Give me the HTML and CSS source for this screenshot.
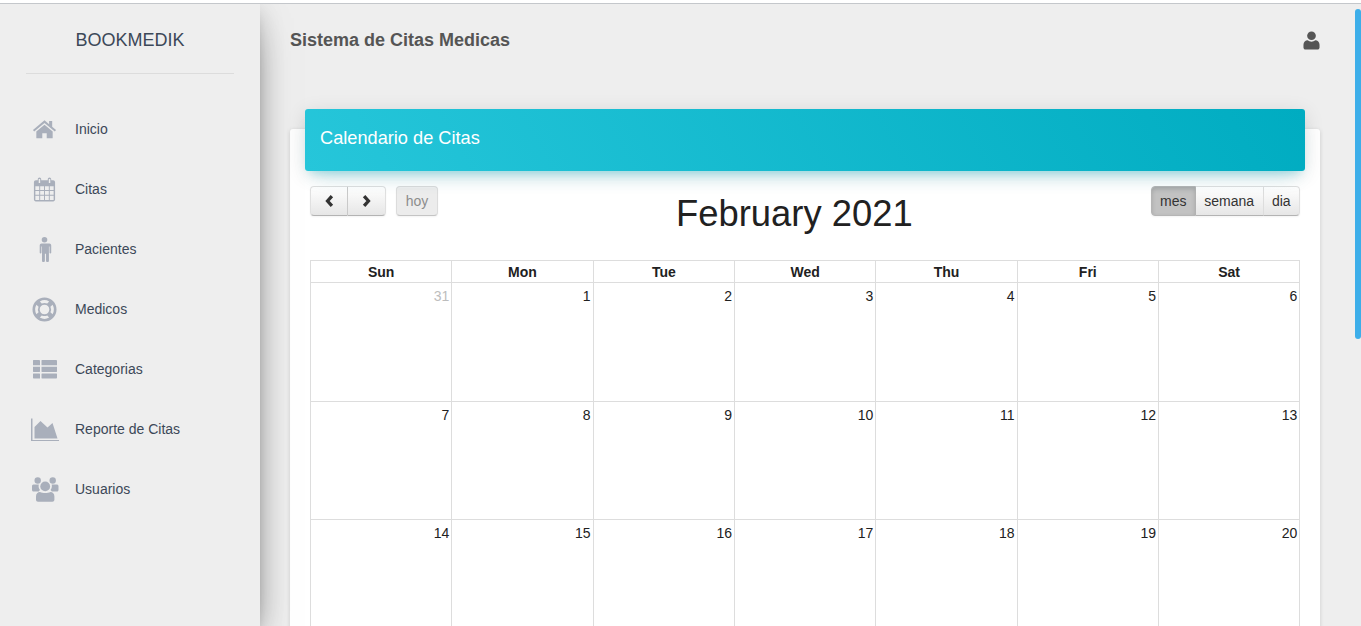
FILE: index.html
```html
<!DOCTYPE html>
<html lang="en">
<head>
  <meta charset="UTF-8">
  <title>BookMedik</title>
  <link rel="stylesheet" href="styles.css">
</head>
<body>

<div class="wrapper">
  <aside class="sidebar">
    <div class="logo">BOOKMEDIK</div>
    <ul class="nav">
      <li>
        <svg class="icon" viewBox="0 0 26 26"><path d="M13 3.500 1 13.600l1.300 1.400L13 6.200 23.700 15l1.300-1.400-4-3.400V4.200h-3.200v3.300z"/><path d="M13 8 4.500 15v7.200h6.200v-5.400h4.600v5.400h6.200V15z"/></svg>
        <span>Inicio</span>
      </li>
      <li>
        <svg class="icon" viewBox="-2 0 26 25">
          <path fill-rule="evenodd" d="M2 3h2V2c0-1 .8-2 1.800-2s1.800 1 1.800 2v1h6.800V2c0-1 .8-2 1.800-2S18 1 18 2v1h2c1.100 0 2 .9 2 2v18c0 1.100-.9 2-2 2H2c-1.100 0-2-.9-2-2V5c0-1.100.9-2 2-2zM5 1.500v4.300h1.500V1.500zM15.500 1.500v4.300H17V1.500zM1.500 9v4h4V9zM6.500 9v4h4V9zM11.500 9v4h4V9zM16.500 9v4h4V9zM1.500 14v4h4v-4zM6.500 14v4h4v-4zM11.500 14v4h4v-4zM16.500 14v4h4v-4zM1.500 19v4.500h4V19zM6.500 19v4.500h4V19zM11.500 19v4.500h4V19zM16.500 19v4.500h4V19z"/>
        </svg>
        <span>Citas</span>
      </li>
      <li>
        <svg class="icon" viewBox="0 0 26 26"><circle cx="13" cy="2.900" r="2.900"/><path d="M8 6.800h10c1.200 0 2 .8 2 2v7.600c0 .9-1.800.9-1.800 0V10h-.6v15c0 1.300-3 1.300-3 0v-7.600h-1.200V25c0 1.300-3 1.300-3 0V10h-.6v6.400c0 .9-1.800.9-1.800 0V8.800c0-1.200.8-2 2-2z"/></svg>
        <span>Pacientes</span>
      </li>
      <li>
        <svg class="icon" viewBox="0 0 26 26"><path fill-rule="evenodd" d="M13 .500a12.500 12.500 0 1 1 0 25 12.500 12.500 0 0 1 0-25zM8.150 4.600l1.980 2.240a6.800 6.800 0 0 1 5.740 0l1.980-2.240a9.700 9.700 0 0 0-9.700 0zM21.400 8.150l-2.240 1.980a6.800 6.800 0 0 1 0 5.740l2.240 1.980a9.700 9.700 0 0 0 0-9.700zM17.850 21.400l-1.980-2.240a6.800 6.800 0 0 1-5.740 0l-1.980 2.240a9.700 9.700 0 0 0 9.700 0zM4.600 17.850l2.240-1.980a6.800 6.800 0 0 1 0-5.740L4.600 8.150a9.700 9.700 0 0 0 0 9.700zM13 8a5 5 0 1 0 0 10 5 5 0 0 0 0-10z"/></svg>
        <span>Medicos</span>
      </li>
      <li>
        <svg class="icon" viewBox="0 0 25 25"><path d="M1.500 3H7c.5 0 1 .4 1 1v4.300H1V3.500c0-.3.200-.5.500-.5zM10 3h14c.5 0 1 .4 1 1v4.300H9.500V3.500c0-.3.200-.5.500-.5zM1 9.800h7v4.700c0 .3-.2.5-.5.5h-6c-.3 0-.5-.2-.5-.5zM9.500 9.800H25v4.700c0 .3-.2.5-.5.500H10c-.3 0-.5-.2-.5-.5zM1.500 16.500h6c.3 0 .5.200.5.500v4.500H2c-.6 0-1-.4-1-1V17c0-.3.200-.5.500-.5zM10 16.500h14.500c.3 0 .5.200.5.500v3.500c0 .6-.4 1-1 1H10c-.3 0-.5-.2-.5-.5V17c0-.3.200-.5.500-.5z"/></svg>
        <span>Categorias</span>
      </li>
      <li>
        <svg class="icon icon-wide" viewBox="0 0 28 25"><path d="M0 1.500h1.500v21.500H28V24H0z"/><path d="M3.500 21.500V10L9.500 4l7 6.500L21.500 6l5 15.500z"/></svg>
        <span>Reporte de Citas</span>
      </li>
      <li>
        <svg class="icon icon-wide" viewBox="0 0 28 25"><circle cx="6.700" cy="3.500" r="3.200"/><circle cx="21.700" cy="3.500" r="3.200"/><circle cx="14.200" cy="9.400" r="4.900"/><path d="M2.500 7.500h5.300c-.5 1.800-.1 4 1.200 5.400-.6.500-1 1-1.300 1.600H2.500c-.8 0-1.500-.7-1.500-1.500v-3.500c0-1.100.4-2 1.500-2zM20.700 7.500H26c1.100 0 1.500.9 1.500 2V13c0 .8-.7 1.500-1.500 1.500h-5.200c-.3-.6-.7-1.100-1.300-1.600 1.300-1.400 1.700-3.600 1.200-5.400z"/><path d="M9 15c1.400.8 3.300 1 5.200 1s3.800-.2 5.200-1c2.400 0 4 1.600 4 4.500v3.300c0 1.100-.9 2-2 2H7c-1.100 0-2-.9-2-2v-3.300C5 16.600 6.600 15 9 15z"/></svg>
        <span>Usuarios</span>
      </li>
    </ul>
  </aside>

  <main class="main">
    <header class="topbar">
      <div class="brand">Sistema de Citas Medicas</div>
      <svg class="user-icon" viewBox="0 0 18 20"><circle cx="9" cy="5" r="4.600"/><path d="M5 9.800c1 .9 2.500 1.400 4 1.400s3-.5 4-1.400c2.500 0 4.500 2 4.500 4.700v2.800c0 1.300-1 2.200-2.200 2.200H2.700c-1.200 0-2.200-.9-2.200-2.200v-2.800c0-2.700 2-4.700 4.500-4.700z"/></svg>
    </header>

    <section class="card">
      <div class="card-header">Calendario de Citas</div>
      <div class="card-body">
        <div class="toolbar">
          <div class="toolbar-left">
            <div class="btn-group">
              <button class="fc-btn arrow">
                <svg viewBox="0 0 8 11"><path d="M6.200 1 2.200 5.500l4 4.500"/></svg>
              </button>
              <button class="fc-btn arrow">
                <svg viewBox="0 0 8 11"><path d="M1.800 1l4 4.500-4 4.500"/></svg>
              </button>
            </div>
            <button class="fc-btn today" disabled>hoy</button>
          </div>
          <h2 class="month">February 2021</h2>
          <div class="btn-group">
            <button class="fc-btn active">mes</button>
            <button class="fc-btn">semana</button>
            <button class="fc-btn">dia</button>
          </div>
        </div>

        <table class="calendar">
          <thead>
            <tr><th>Sun</th><th>Mon</th><th>Tue</th><th>Wed</th><th>Thu</th><th>Fri</th><th>Sat</th></tr>
          </thead>
          <tbody>
            <tr class="first"><td class="other">31</td><td>1</td><td>2</td><td>3</td><td>4</td><td>5</td><td>6</td></tr>
            <tr><td>7</td><td>8</td><td>9</td><td>10</td><td>11</td><td>12</td><td>13</td></tr>
            <tr><td>14</td><td>15</td><td>16</td><td>17</td><td>18</td><td>19</td><td>20</td></tr>
          </tbody>
        </table>
      </div>
    </section>
  </main>

  <div class="scrollbar"><div class="thumb"></div></div>
</div>

</body>
</html>
```

FILE: styles.css
```css
* { box-sizing: border-box; }

html {
  height: 100%;
  background-color: #fff;
  padding-top: 3px;
}

body {
  margin: 0;
  overflow: hidden;
  font-family: "Liberation Sans", Arial, sans-serif;
  background-color: #eee;
  color: #3c4858;
  border-top: 1px solid #c4c7cb;
}

.wrapper {
  display: flex;
  height: 622px;
  overflow: hidden;
}

/* Sidebar */
.sidebar {
  width: 260px;
  flex: none;
  background-color: #eee;
  box-shadow: 0 16px 38px -12px rgba(0,0,0,0.56), 0 4px 25px 0 rgba(0,0,0,0.12), 0 8px 10px -5px rgba(0,0,0,0.2);
  position: relative;
  z-index: 2;
}

.logo {
  margin: 0 26px;
  height: 70px;
  line-height: 72px;
  text-align: center;
  font-size: 18px;
  border-bottom: 1px solid #dcdcdc;
}

.nav {
  list-style: none;
  margin: 25px 0 0;
  padding: 0;
}

.nav li {
  height: 60px;
  display: flex;
  align-items: center;
  padding-left: 32px;
  font-size: 14px;
  color: #3c4858;
}

.nav li span {
  margin-left: 18px;
}

.icon {
  width: 25px;
  height: 25px;
  fill: #a9afbb;
  flex: none;
}

.icon-wide {
  width: 28px;
  margin-left: -1px;
  margin-right: -2px;
}

/* Main */
.main {
  flex: 1;
  padding: 0 41px 0 30px;
  min-width: 0;
}

.topbar {
  height: 72px;
  display: flex;
  align-items: center;
  justify-content: space-between;
}

.brand {
  font-size: 18px;
  font-weight: bold;
  color: #555;
}

.user-icon {
  width: 17px;
  height: 19px;
  fill: #555;
}

.card {
  display: flow-root;
  margin-top: 53px;
  background-color: #fff;
  border-radius: 3px;
  box-shadow: 0 1px 4px 0 rgba(0,0,0,0.14);
  padding: 0 20px;
}

.card-header {
  margin: -20px -5px 0;
  height: 62px;
  line-height: 58px;
  padding-left: 15px;
  font-size: 18.2px;
  color: #fff;
  border-radius: 3px;
  background: linear-gradient(60deg, #26c6da, #00acc1);
  box-shadow: 0 12px 20px -10px rgba(0,188,212,0.28), 0 4px 20px 0 rgba(0,0,0,0.12), 0 7px 8px -5px rgba(0,188,212,0.2);
  position: relative;
}

.card-body {
  padding-top: 15px;
}

/* Calendar toolbar */
.toolbar {
  display: flex;
  justify-content: space-between;
  align-items: flex-start;
  height: 74px;
}

.toolbar-left {
  display: flex;
  gap: 10px;
}

.month {
  margin: 0;
  font-size: 36.4px;
  font-weight: normal;
  line-height: 56px;
  color: #212121;
}

.btn-group {
  display: flex;
}

.fc-btn {
  height: 30px;
  padding: 0 8.4px;
  font-family: inherit;
  font-size: 14px;
  color: #333;
  background: linear-gradient(to bottom, #fff, #e6e6e6);
  border: 1px solid #e0e0e0;
  border-left-width: 0;
  border-bottom-color: #b3b3b3;
  box-shadow: inset 0 1px 0 rgba(255,255,255,0.2), 0 1px 2px rgba(0,0,0,0.05);
}

.btn-group .fc-btn:first-child {
  border-left-width: 1px;
  border-radius: 4px 0 0 4px;
}

.btn-group .fc-btn:last-child {
  border-radius: 0 4px 4px 0;
}

.fc-btn.arrow {
  width: 38px;
  padding: 0;
  border-right: 1px solid #ccc;
}

.btn-group .fc-btn.arrow:last-child {
  border-left-width: 0;
  border-right: 1px solid #e0e0e0;
}

.fc-btn.arrow svg {
  width: 9px;
  height: 12px;
  fill: none;
  stroke: #333;
  stroke-width: 3;
  display: block;
  margin: 0 auto;
}

.fc-btn.today {
  width: 42px;
  padding: 0;
  border-left-width: 1px;
  border-radius: 4px;
  color: #8c8c8c;
  background: #ececec;
  border-color: #dcdcdc;
  border-bottom-color: #c4c4c4;
}

.fc-btn.active {
  color: #333;
  background: #c2c2c2;
  border-color: #b5b5b5;
  box-shadow: inset 0 2px 4px rgba(0,0,0,0.15), 0 1px 2px rgba(0,0,0,0.05);
}

/* Calendar grid */
.calendar {
  width: 990.3px;
  table-layout: fixed;
  border-collapse: collapse;
  font-size: 14px;
  color: #212121;
}

.calendar th,
.calendar td {
  border: 1px solid #ddd;
}

.calendar th {
  height: 22px;
  padding: 0;
  font-weight: bold;
  text-align: center;
}

.calendar td {
  height: 118px;
  padding: 5px 2px 0 0;
  text-align: right;
  vertical-align: top;
  line-height: 16px;
}

.calendar .first td {
  height: 119px;
}

.calendar td.other {
  color: #bdbdbd;
}

/* Window scrollbar */
.scrollbar {
  position: fixed;
  top: 9px;
  right: 0;
  width: 6px;
  height: 330px;
}

.thumb {
  height: 100%;
  background-color: #3daee9;
  border-radius: 3px;
}
```
